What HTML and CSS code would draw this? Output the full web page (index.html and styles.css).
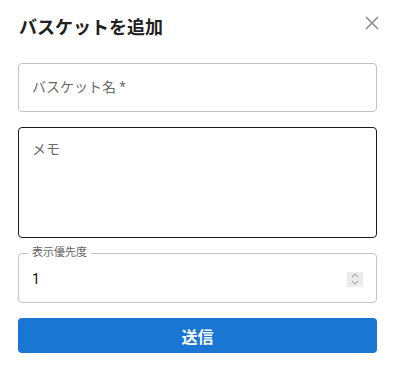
FILE: index.html
```html
<!DOCTYPE html>
<html lang="ja">
<head>
    <meta charset="UTF-8">
    <meta name="viewport" content="width=device-width, initial-scale=1.0">
    <title>バスケットを追加</title>
    <link rel="stylesheet" href="styles.css">
</head>
<body>
    <div class="dialog">
      <div class="dialog-title">
        <h2>バスケットを追加</h2>
        <span class="close">
          <svg width="14" height="14" viewBox="0 0 14 14"><path d="M1 1L13 13M13 1L1 13" stroke="#8c8c8c" stroke-width="1.6" fill="none"/></svg>
        </span>
      </div>
      <form class="dialog-form">
        <div class="field name">
          <span class="placeholder">バスケット名 *</span>
        </div>
        <div class="field memo">
          <span class="placeholder">メモ</span>
        </div>
        <div class="field priority">
          <span class="label">表示優先度</span>
          <span class="value">1</span>
          <span class="spinner">
            <svg width="8" height="12" viewBox="0 0 8 12"><path d="M1 4L4 1L7 4M1 8L4 11L7 8" stroke="#8a8a8a" stroke-width="1" fill="none"/></svg>
          </span>
        </div>
        <button type="button" class="submit">送信</button>
      </form>
    </div>
</body>
</html>
```

FILE: styles.css
```css
body {
  margin: 0;
  background: #fff;
  font-family: Roboto, "Noto Sans CJK JP", sans-serif;
  color: #222;
}

.dialog {
  padding: 0 18px;
}

.dialog-title {
  display: flex;
  align-items: center;
  justify-content: space-between;
  height: 52px;
}

.dialog-title h2 {
  margin: 0;
  font-size: 18px;
  font-weight: 700;
  color: #212121;
  padding-left: 1px;
}

.close {
  display: flex;
  margin-right: -2px;
  margin-top: -6px;
}

.dialog-form {
  display: flex;
  flex-direction: column;
  gap: 15px;
  margin-top: 11px;
}

.field {
  box-sizing: border-box;
  border: 1px solid #c4c4c4;
  border-radius: 4px;
  padding: 0 13px;
  position: relative;
}

.field.name {
  height: 49px;
  display: flex;
  align-items: center;
  padding-bottom: 3px;
}

.field.memo {
  height: 111px;
  border-color: #1c1c1c;
  padding-top: 10px;
}

.placeholder {
  font-size: 14px;
  color: #6b6b6b;
}

.field.priority {
  height: 50px;
  display: flex;
  align-items: center;
  justify-content: space-between;
  padding-top: 2px;
}

.priority .label {
  position: absolute;
  top: -8px;
  left: 9px;
  padding: 0 4px;
  background: #fff;
  font-size: 11px;
  line-height: 14px;
  color: #666;
}

.priority .value {
  font-size: 14px;
  color: #111;
}

.spinner {
  display: flex;
  align-items: center;
  justify-content: center;
  width: 16px;
  height: 15px;
  background: #ebebeb;
}

.submit {
  height: 35px;
  border: none;
  border-radius: 4px;
  background: #1976d2;
  color: #fff;
  font-family: Roboto, "Noto Sans CJK JP", sans-serif;
  font-size: 16px;
  font-weight: 700;
}
```
